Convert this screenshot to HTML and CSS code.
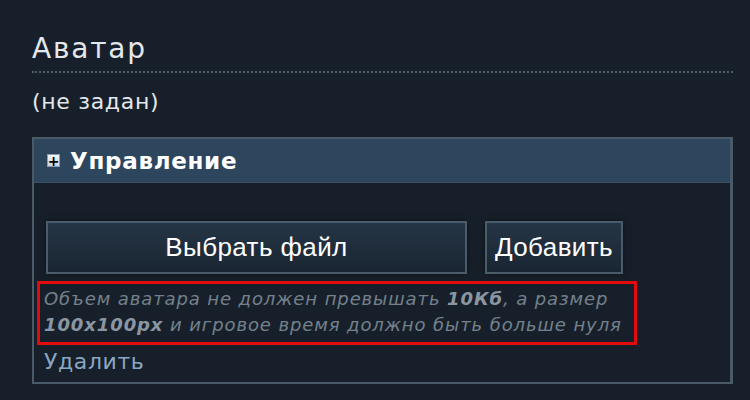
FILE: index.html
```html
<!DOCTYPE html>
<html lang="ru">
<head>
  <meta charset="UTF-8">
  <title>Аватар</title>
  <link rel="stylesheet" href="styles.css">
</head>
<body>
  <div class="page">
    <h1 class="title">Аватар</h1>
    <p class="status">(не задан)</p>

    <!-- Блок управления аватаром -->
    <div class="panel">
      <div class="panel-head">
        <span class="toggle">+</span>
        <span>Управление</span>
      </div>
      <div class="panel-body">
        <div class="actions">
          <button class="btn btn-file">Выбрать файл</button>
          <button class="btn btn-add">Добавить</button>
        </div>
        <p class="hint">Объем аватара не должен превышать <b>10Кб</b>, а размер <b>100x100px</b> и игровое время должно быть больше нуля</p>
        <a href="#" class="remove">Удалить</a>
      </div>
    </div>
  </div>
</body>
</html>
```

FILE: styles.css
```css
* {
  margin: 0;
  padding: 0;
  box-sizing: border-box;
}
body {
  background: #17202a;
  color: #e4e8ec;
  font-family: "DejaVu Sans", Verdana, sans-serif;
}
.page {
  width: 733px;
  padding: 30px 0 0 32px;
}

/* Заголовок */
.title {
  font-size: 28px;
  font-weight: normal;
  letter-spacing: 1.8px;
  line-height: 38px;
  padding-bottom: 3px;
  border-bottom: 2px dotted #4f5d6a;
}
.status {
  font-size: 22px;
  letter-spacing: 0.7px;
  line-height: 30px;
  margin-top: 14px;
}

/* Панель */
.panel {
  margin-top: 20px;
  border: 2px solid #4b5a67;
  border-right-width: 3px;
}
.panel-head {
  display: flex;
  align-items: center;
  gap: 10px;
  height: 44px;
  padding-left: 13px;
  background: #2d465e;
  border-bottom: 1px solid #3a5168;
  font-size: 23px;
  font-weight: bold;
  letter-spacing: 0.7px;
  color: #fff;
}
.toggle {
  display: inline-flex;
  align-items: center;
  justify-content: center;
  width: 13px;
  height: 13px;
  background: linear-gradient(#f4f7fb, #c9d3e2);
  border: 1px solid #8e9cb6;
  color: #000;
  font-size: 14px;
  line-height: 1;
  font-weight: bold;
  letter-spacing: 0;
}
.panel-body {
  padding: 38px 12px 5px 3px;
}

/* Кнопки */
.actions {
  display: flex;
  gap: 18px;
  padding-left: 9px;
}
.btn {
  height: 53px;
  background: linear-gradient(#253545, #1a2532);
  border: 2px solid #4a5b69;
  color: #fff;
  font-family: "Liberation Sans", Arial, sans-serif;
  font-size: 26px;
  letter-spacing: 0.4px;
  box-shadow: 0 0 6px rgba(0,0,0,0.5);
}
.btn-file {
  width: 421px;
}
.btn-add {
  width: 138px;
  padding: 0 4px;
}

/* Подсказка */
.hint {
  width: 600px;
  margin-top: 7px;
  padding: 2px 3px 4px 4px;
  border: 3px solid #e30b0b;
  color: #74808c;
  font-size: 18px;
  font-style: italic;
  line-height: 26px;
  letter-spacing: 0.9px;
}
.hint b {
  color: #8a96a2;
}
.remove {
  display: block;
  margin-left: 7px;
  margin-top: 2px;
  font-size: 22px;
  letter-spacing: 0.6px;
  line-height: 30px;
  color: #8ba6c0;
  text-decoration: none;
}
```
